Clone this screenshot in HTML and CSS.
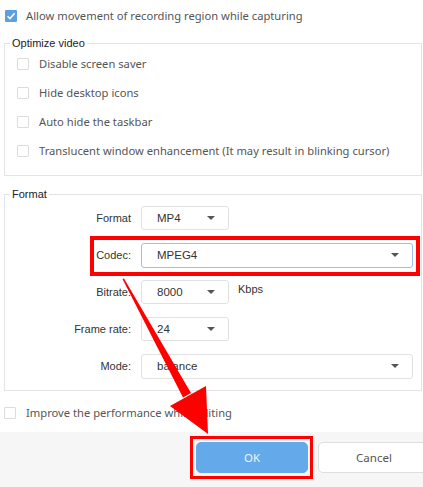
FILE: index.html
```html
<!DOCTYPE html>
<html>
<head>
<meta charset="utf-8">
<link rel="stylesheet" href="styles.css">
</head>
<body>
<div class="page">
  <div class="check-row top">
    <span class="cb checked"><svg viewBox="0 0 12 12" width="12" height="12"><path d="M2.6 6.2 L5 8.6 L9.6 3.2" fill="none" stroke="#fff" stroke-width="1.6"/></svg></span>
    <span class="txt">Allow movement of recording region while capturing</span>
  </div>

  <fieldset class="group optimize">
    <legend>Optimize video</legend>
    <div class="opt-row"><span class="cb"></span><span class="txt">Disable screen saver</span></div>
    <div class="opt-row"><span class="cb"></span><span class="txt">Hide desktop icons</span></div>
    <div class="opt-row"><span class="cb"></span><span class="txt">Auto hide the taskbar</span></div>
    <div class="opt-row"><span class="cb"></span><span class="txt">Translucent window enhancement (It may result in blinking cursor)</span></div>
  </fieldset>

  <fieldset class="group format">
    <legend>Format</legend>
    <div class="form-grid">
      <span class="lbl">Format</span>
      <div class="field"><div class="select small"><span>MP4</span><i class="caret"></i></div></div>
      <span class="lbl">Codec:</span>
      <div class="field"><div class="select large focus"><span>MPEG4</span><i class="caret"></i></div></div>
      <span class="lbl">Bitrate:</span>
      <div class="field"><div class="select small"><span>8000</span><i class="caret"></i></div><span class="unit">Kbps</span></div>
      <span class="lbl">Frame rate:</span>
      <div class="field"><div class="select small"><span>24</span><i class="caret"></i></div></div>
      <span class="lbl">Mode:</span>
      <div class="field"><div class="select large"><span>balance</span><i class="caret"></i></div></div>
    </div>
  </fieldset>

  <div class="check-row improve">
    <span class="cb"></span>
    <span class="txt">Improve the performance while editing</span>
  </div>

  <div class="footer">
    <button class="btn ok">OK</button>
    <button class="btn cancel">Cancel</button>
  </div>

  <div class="hl hl-codec"></div>
  <div class="hl hl-ok"></div>
  <svg class="arrow" width="423" height="487" viewBox="0 0 423 487">
    <polygon points="122.5,279 124,278.5 191,393 183,397.5" fill="#f00"/>
    <polygon points="208,434 206,386 170,406" fill="#f00"/>
  </svg>
</div>
</body>
</html>
```

FILE: styles.css
```css
html, body {
  margin: 0;
  padding: 0;
  background: #fff;
}

.page {
  position: relative;
  width: 423px;
  height: 487px;
  overflow: hidden;
  font-family: "Noto Sans", "Open Sans", sans-serif;
  font-size: 11.2px;
  color: #555;
}

.cb {
  box-sizing: border-box;
  width: 12px;
  height: 12px;
  border: 1px solid #dcdcdc;
  border-radius: 1px;
  background: #fff;
  flex: none;
  display: block;
}

.cb.checked {
  border: none;
  background: #5e9fe0;
}

.cb svg {
  display: block;
}

.txt {
  line-height: 14px;
  white-space: nowrap;
}

.check-row {
  display: flex;
  align-items: center;
  gap: 9px;
  height: 12px;
}

.check-row.top {
  margin: 10px 0 0 5px;
}

.check-row.improve {
  margin: 15px 0 0 4px;
  height: 13px;
  gap: 10px;
}

.group {
  margin: 0 1px 0 4px;
  padding: 0;
  border: 1px solid #e4e4e4;
  min-width: 0;
}

.group legend {
  margin-left: 5px;
  padding: 0 2px;
  font-family: "Liberation Sans", Arial, sans-serif;
  font-size: 11px;
  line-height: 12px;
  color: #222;
}

.optimize {
  margin-top: 15px;
  padding-bottom: 10px;
}

.opt-row {
  display: flex;
  align-items: center;
  gap: 10px;
  height: 29px;
  padding-left: 12px;
}

.format {
  margin-top: 12px;
  padding: 6px 0 12px 0;
}

.form-grid {
  display: grid;
  grid-template-columns: 126px auto;
  column-gap: 10px;
  row-gap: 13px;
  align-items: center;
}

.lbl {
  text-align: right;
  font-family: "Liberation Sans", Arial, sans-serif;
  font-size: 11px;
  color: #333;
  white-space: nowrap;
}

.field {
  display: flex;
  align-items: center;
  gap: 9px;
  height: 24px;
}

.unit {
  font-family: "Liberation Sans", Arial, sans-serif;
  font-size: 11px;
  color: #333;
  margin-top: -6px;
}

.select {
  box-sizing: border-box;
  height: 24px;
  border: 1px solid #e1e1e1;
  border-radius: 3px;
  background: #fff;
  display: flex;
  align-items: center;
  justify-content: space-between;
  padding: 0 13px 0 15px;
  font-family: "Liberation Sans", Arial, sans-serif;
  font-size: 11.5px;
  color: #333;
}

.select.small {
  width: 88px;
}

.select.large {
  width: 272px;
  height: 25px;
}

.select.focus {
  border-color: #9ac2ec;
}

.caret {
  width: 0;
  height: 0;
  border-left: 4px solid transparent;
  border-right: 4px solid transparent;
  border-top: 4px solid #555;
}

.footer {
  position: absolute;
  left: 0;
  right: 0;
  top: 432px;
  bottom: 0;
  background: #f6f6f6;
  display: flex;
  align-items: flex-start;
  gap: 10px;
  padding: 10px 0 0 196px;
}

.btn {
  box-sizing: border-box;
  flex: none;
  width: 112px;
  height: 31px;
  border-radius: 5px;
  font-family: "Noto Sans", "Open Sans", sans-serif;
  font-size: 11.5px;
  padding: 0;
}

.btn.ok {
  background: #64a9ea;
  border: 1px solid #64a9ea;
  color: #eef5fd;
}

.btn.cancel {
  background: #fff;
  border: 1px solid #dedede;
  color: #555;
}

.hl {
  position: absolute;
  box-sizing: border-box;
  border: 4px solid #f00;
}

.hl-codec {
  left: 90px;
  top: 236px;
  width: 330px;
  height: 40px;
}

.hl-ok {
  left: 190px;
  top: 436px;
  width: 123px;
  height: 43px;
  border-width: 3px;
}

.arrow {
  position: absolute;
  left: 0;
  top: 0;
  pointer-events: none;
}
```
